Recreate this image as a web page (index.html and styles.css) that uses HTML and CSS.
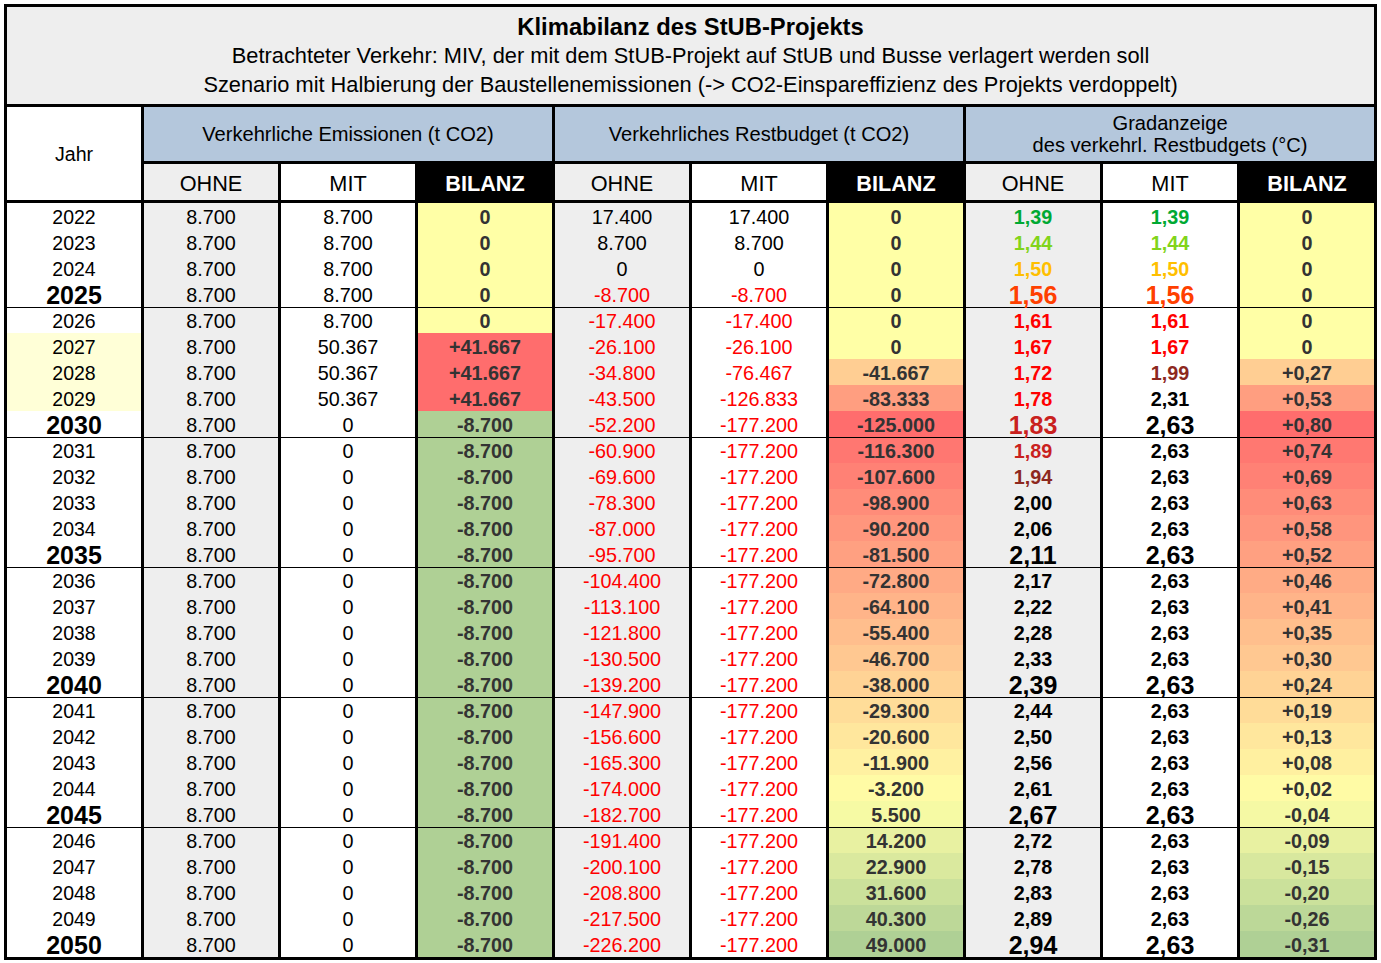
FILE: index.html
```html
<!DOCTYPE html>
<html lang="de">
<head>
<meta charset="utf-8">
<title>Klimabilanz des StUB-Projekts</title>
<link rel="stylesheet" href="styles.css">
</head>
<body>
<table class="sheet">
  <colgroup>
    <col><col><col><col><col><col><col><col><col><col>
  </colgroup>
  <thead>
    <tr class="r-title">
      <td colspan="10" class="title">
        <div class="title-main">Klimabilanz des StUB-Projekts</div>
        <div class="title-sub">Betrachteter Verkehr: MIV, der mit dem StUB-Projekt auf StUB und Busse verlagert werden soll</div>
        <div class="title-sub">Szenario mit Halbierung der Baustellenemissionen (-&gt; CO2-Einspareffizienz des Projekts verdoppelt)</div>
      </td>
    </tr>
    <tr class="r-group">
      <td rowspan="2" class="h-jahr">Jahr</td>
      <td colspan="3" class="h-group">Verkehrliche Emissionen (t CO2)</td>
      <td colspan="3" class="h-group">Verkehrliches Restbudget (t CO2)</td>
      <td colspan="3" class="h-group h-two">Gradanzeige<br>des verkehrl. Restbudgets (°C)</td>
    </tr>
    <tr class="r-sub">
      <td class="h-sub h-ohne">OHNE</td><td class="h-sub h-mit">MIT</td><td class="h-sub h-bil">BILANZ</td>
      <td class="h-sub h-ohne">OHNE</td><td class="h-sub h-mit">MIT</td><td class="h-sub h-bil">BILANZ</td>
      <td class="h-sub h-ohne">OHNE</td><td class="h-sub h-mit">MIT</td><td class="h-sub h-bil">BILANZ</td>
    </tr>
  </thead>
  <tbody>
    <tr><td class="yr">2022</td><td class="ohne">8.700</td><td class="mit">8.700</td><td class="bil b-yel">0</td><td class="ohne">17.400</td><td class="mit">17.400</td><td class="bil b-yel">0</td><td class="ohne grad g1">1,39</td><td class="mit grad g1">1,39</td><td class="bil b-yel">0</td></tr>
    <tr><td class="yr">2023</td><td class="ohne">8.700</td><td class="mit">8.700</td><td class="bil b-yel">0</td><td class="ohne">8.700</td><td class="mit">8.700</td><td class="bil b-yel">0</td><td class="ohne grad g2">1,44</td><td class="mit grad g2">1,44</td><td class="bil b-yel">0</td></tr>
    <tr><td class="yr">2024</td><td class="ohne">8.700</td><td class="mit">8.700</td><td class="bil b-yel">0</td><td class="ohne">0</td><td class="mit">0</td><td class="bil b-yel">0</td><td class="ohne grad g3">1,50</td><td class="mit grad g3">1,50</td><td class="bil b-yel">0</td></tr>
    <tr><td class="yr big">2025</td><td class="ohne">8.700</td><td class="mit">8.700</td><td class="bil b-yel">0</td><td class="ohne neg">-8.700</td><td class="mit neg">-8.700</td><td class="bil b-yel">0</td><td class="ohne grad g4 big">1,56</td><td class="mit grad g4 big">1,56</td><td class="bil b-yel">0</td></tr>

    <tr class="grp"><td class="yr">2026</td><td class="ohne">8.700</td><td class="mit">8.700</td><td class="bil b-yel">0</td><td class="ohne neg">-17.400</td><td class="mit neg">-17.400</td><td class="bil b-yel">0</td><td class="ohne grad g5">1,61</td><td class="mit grad g5">1,61</td><td class="bil b-yel">0</td></tr>
    <tr><td class="yr hl">2027</td><td class="ohne">8.700</td><td class="mit">50.367</td><td class="bil b-red">+41.667</td><td class="ohne neg">-26.100</td><td class="mit neg">-26.100</td><td class="bil b-yel">0</td><td class="ohne grad g5">1,67</td><td class="mit grad g5">1,67</td><td class="bil b-yel">0</td></tr>
    <tr><td class="yr hl">2028</td><td class="ohne">8.700</td><td class="mit">50.367</td><td class="bil b-red">+41.667</td><td class="ohne neg">-34.800</td><td class="mit neg">-76.467</td><td class="bil" style="background:rgb(255,206,147)">-41.667</td><td class="ohne grad g5">1,72</td><td class="mit grad g7">1,99</td><td class="bil" style="background:rgb(255,206,147)">+0,27</td></tr>
    <tr><td class="yr hl">2029</td><td class="ohne">8.700</td><td class="mit">50.367</td><td class="bil b-red">+41.667</td><td class="ohne neg">-43.500</td><td class="mit neg">-126.833</td><td class="bil" style="background:rgb(255,158,128)">-83.333</td><td class="ohne grad g5">1,78</td><td class="mit grad">2,31</td><td class="bil" style="background:rgb(255,158,128)">+0,53</td></tr>
    <tr><td class="yr big">2030</td><td class="ohne">8.700</td><td class="mit">0</td><td class="bil b-grn">-8.700</td><td class="ohne neg">-52.200</td><td class="mit neg">-177.200</td><td class="bil" style="background:rgb(255,109,109)">-125.000</td><td class="ohne grad g6 big">1,83</td><td class="mit grad big">2,63</td><td class="bil" style="background:rgb(255,109,109)">+0,80</td></tr>

    <tr class="grp"><td class="yr">2031</td><td class="ohne">8.700</td><td class="mit">0</td><td class="bil b-grn">-8.700</td><td class="ohne neg">-60.900</td><td class="mit neg">-177.200</td><td class="bil" style="background:rgb(255,119,113)">-116.300</td><td class="ohne grad g6">1,89</td><td class="mit grad">2,63</td><td class="bil" style="background:rgb(255,120,113)">+0,74</td></tr>
    <tr><td class="yr">2032</td><td class="ohne">8.700</td><td class="mit">0</td><td class="bil b-grn">-8.700</td><td class="ohne neg">-69.600</td><td class="mit neg">-177.200</td><td class="bil" style="background:rgb(255,129,117)">-107.600</td><td class="ohne grad g7">1,94</td><td class="mit grad">2,63</td><td class="bil" style="background:rgb(255,129,117)">+0,69</td></tr>
    <tr><td class="yr">2033</td><td class="ohne">8.700</td><td class="mit">0</td><td class="bil b-grn">-8.700</td><td class="ohne neg">-78.300</td><td class="mit neg">-177.200</td><td class="bil" style="background:rgb(255,140,121)">-98.900</td><td class="ohne grad">2,00</td><td class="mit grad">2,63</td><td class="bil" style="background:rgb(255,140,121)">+0,63</td></tr>
    <tr><td class="yr">2034</td><td class="ohne">8.700</td><td class="mit">0</td><td class="bil b-grn">-8.700</td><td class="ohne neg">-87.000</td><td class="mit neg">-177.200</td><td class="bil" style="background:rgb(255,150,125)">-90.200</td><td class="ohne grad">2,06</td><td class="mit grad">2,63</td><td class="bil" style="background:rgb(255,149,125)">+0,58</td></tr>
    <tr><td class="yr big">2035</td><td class="ohne">8.700</td><td class="mit">0</td><td class="bil b-grn">-8.700</td><td class="ohne neg">-95.700</td><td class="mit neg">-177.200</td><td class="bil" style="background:rgb(255,160,129)">-81.500</td><td class="ohne grad big">2,11</td><td class="mit grad big">2,63</td><td class="bil" style="background:rgb(255,160,129)">+0,52</td></tr>

    <tr class="grp"><td class="yr">2036</td><td class="ohne">8.700</td><td class="mit">0</td><td class="bil b-grn">-8.700</td><td class="ohne neg">-104.400</td><td class="mit neg">-177.200</td><td class="bil" style="background:rgb(255,170,133)">-72.800</td><td class="ohne grad">2,17</td><td class="mit grad">2,63</td><td class="bil" style="background:rgb(255,171,133)">+0,46</td></tr>
    <tr><td class="yr">2037</td><td class="ohne">8.700</td><td class="mit">0</td><td class="bil b-grn">-8.700</td><td class="ohne neg">-113.100</td><td class="mit neg">-177.200</td><td class="bil" style="background:rgb(255,180,137)">-64.100</td><td class="ohne grad">2,22</td><td class="mit grad">2,63</td><td class="bil" style="background:rgb(255,180,137)">+0,41</td></tr>
    <tr><td class="yr">2038</td><td class="ohne">8.700</td><td class="mit">0</td><td class="bil b-grn">-8.700</td><td class="ohne neg">-121.800</td><td class="mit neg">-177.200</td><td class="bil" style="background:rgb(255,190,141)">-55.400</td><td class="ohne grad">2,28</td><td class="mit grad">2,63</td><td class="bil" style="background:rgb(255,191,141)">+0,35</td></tr>
    <tr><td class="yr">2039</td><td class="ohne">8.700</td><td class="mit">0</td><td class="bil b-grn">-8.700</td><td class="ohne neg">-130.500</td><td class="mit neg">-177.200</td><td class="bil" style="background:rgb(255,200,145)">-46.700</td><td class="ohne grad">2,33</td><td class="mit grad">2,63</td><td class="bil" style="background:rgb(255,200,145)">+0,30</td></tr>
    <tr><td class="yr big">2040</td><td class="ohne">8.700</td><td class="mit">0</td><td class="bil b-grn">-8.700</td><td class="ohne neg">-139.200</td><td class="mit neg">-177.200</td><td class="bil" style="background:rgb(255,211,149)">-38.000</td><td class="ohne grad big">2,39</td><td class="mit grad big">2,63</td><td class="bil" style="background:rgb(255,211,149)">+0,24</td></tr>

    <tr class="grp"><td class="yr">2041</td><td class="ohne">8.700</td><td class="mit">0</td><td class="bil b-grn">-8.700</td><td class="ohne neg">-147.900</td><td class="mit neg">-177.200</td><td class="bil" style="background:rgb(255,221,153)">-29.300</td><td class="ohne grad">2,44</td><td class="mit grad">2,63</td><td class="bil" style="background:rgb(255,220,152)">+0,19</td></tr>
    <tr><td class="yr">2042</td><td class="ohne">8.700</td><td class="mit">0</td><td class="bil b-grn">-8.700</td><td class="ohne neg">-156.600</td><td class="mit neg">-177.200</td><td class="bil" style="background:rgb(255,231,157)">-20.600</td><td class="ohne grad">2,50</td><td class="mit grad">2,63</td><td class="bil" style="background:rgb(255,231,157)">+0,13</td></tr>
    <tr><td class="yr">2043</td><td class="ohne">8.700</td><td class="mit">0</td><td class="bil b-grn">-8.700</td><td class="ohne neg">-165.300</td><td class="mit neg">-177.200</td><td class="bil" style="background:rgb(255,241,161)">-11.900</td><td class="ohne grad">2,56</td><td class="mit grad">2,63</td><td class="bil" style="background:rgb(255,240,160)">+0,08</td></tr>
    <tr><td class="yr">2044</td><td class="ohne">8.700</td><td class="mit">0</td><td class="bil b-grn">-8.700</td><td class="ohne neg">-174.000</td><td class="mit neg">-177.200</td><td class="bil" style="background:rgb(255,251,165)">-3.200</td><td class="ohne grad">2,61</td><td class="mit grad">2,63</td><td class="bil" style="background:rgb(255,251,165)">+0,02</td></tr>
    <tr><td class="yr big">2045</td><td class="ohne">8.700</td><td class="mit">0</td><td class="bil b-grn">-8.700</td><td class="ohne neg">-182.700</td><td class="mit neg">-177.200</td><td class="bil" style="background:rgb(246,250,164)">5.500</td><td class="ohne grad big">2,67</td><td class="mit grad big">2,63</td><td class="bil" style="background:rgb(245,249,164)">-0,04</td></tr>

    <tr class="grp"><td class="yr">2046</td><td class="ohne">8.700</td><td class="mit">0</td><td class="bil b-grn">-8.700</td><td class="ohne neg">-191.400</td><td class="mit neg">-177.200</td><td class="bil" style="background:rgb(232,241,161)">14.200</td><td class="ohne grad">2,72</td><td class="mit grad">2,63</td><td class="bil" style="background:rgb(232,241,161)">-0,09</td></tr>
    <tr><td class="yr">2047</td><td class="ohne">8.700</td><td class="mit">0</td><td class="bil b-grn">-8.700</td><td class="ohne neg">-200.100</td><td class="mit neg">-177.200</td><td class="bil" style="background:rgb(218,233,158)">22.900</td><td class="ohne grad">2,78</td><td class="mit grad">2,63</td><td class="bil" style="background:rgb(216,232,158)">-0,15</td></tr>
    <tr><td class="yr">2048</td><td class="ohne">8.700</td><td class="mit">0</td><td class="bil b-grn">-8.700</td><td class="ohne neg">-208.800</td><td class="mit neg">-177.200</td><td class="bil" style="background:rgb(203,225,155)">31.600</td><td class="ohne grad">2,83</td><td class="mit grad">2,63</td><td class="bil" style="background:rgb(203,225,155)">-0,20</td></tr>
    <tr><td class="yr">2049</td><td class="ohne">8.700</td><td class="mit">0</td><td class="bil b-grn">-8.700</td><td class="ohne neg">-217.500</td><td class="mit neg">-177.200</td><td class="bil" style="background:rgb(189,216,152)">40.300</td><td class="ohne grad">2,89</td><td class="mit grad">2,63</td><td class="bil" style="background:rgb(188,216,152)">-0,26</td></tr>
    <tr><td class="yr big">2050</td><td class="ohne">8.700</td><td class="mit">0</td><td class="bil b-grn">-8.700</td><td class="ohne neg">-226.200</td><td class="mit neg">-177.200</td><td class="bil" style="background:rgb(175,208,149)">49.000</td><td class="ohne grad big">2,94</td><td class="mit grad big">2,63</td><td class="bil" style="background:rgb(175,208,149)">-0,31</td></tr>
  </tbody>
</table>
</body>
</html>
```

FILE: styles.css
```css
html, body {
  margin: 0;
  padding: 0;
  background: #ffffff;
}

body {
  font-family: "Liberation Sans", Arial, sans-serif;
  color: #000;
}

.sheet {
  margin: 4px 0 0 4px;
  width: 1373px;
  table-layout: fixed;
  border-collapse: separate;
  border-spacing: 3px 0;
  background: #000;
  border-top: 3px solid #000;
  border-bottom: 3px solid #000;
}

.sheet col {
  width: 134px;
}

.sheet td {
  padding: 0;
  text-align: center;
  white-space: nowrap;
}

/* Title block */
.r-title {
  height: 100px;
}

.title {
  background: #eeeeee;
  border-bottom: 3px solid #000;
  vertical-align: top;
  padding-top: 5px !important;
  line-height: 29px;
}

.title-main {
  font-weight: bold;
  font-size: 23.8px;
}

.title-sub {
  font-size: 21.8px;
}

/* Group header */
.r-group {
  height: 57px;
}

.h-jahr {
  background: #ffffff;
  border-bottom: 3px solid #000;
  font-size: 19.6px;
  vertical-align: middle;
  padding-top: 2px !important;
}

.h-group {
  background: #b4c7dc;
  border-bottom: 3px solid #000;
  font-size: 20.1px;
  vertical-align: middle;
}

.h-two {
  line-height: 22px;
}

/* Sub header */
.r-sub {
  height: 39px;
}

.h-sub {
  border-bottom: 3px solid #000;
  font-size: 21.7px;
  vertical-align: middle;
  line-height: 24px;
  padding-top: 3px !important;
}

.h-ohne {
  background: #eeeeee;
}

.h-mit {
  background: #ffffff;
}

.h-bil {
  background: #000;
  color: #fff;
  font-weight: bold;
}

/* Data rows */
.sheet tbody tr {
  height: 26px;
}

.sheet tbody td {
  vertical-align: bottom;
  font-size: 19.8px;
  line-height: 24px;
}

.sheet tbody tr.grp td {
  border-top: 1px solid #000;
}

.yr {
  background: #ffffff;
  font-size: 19.5px !important;
}

.yr.hl {
  background: #ffffd7;
}

.ohne {
  background: #eeeeee;
}

.mit {
  background: #ffffff;
}

.bil {
  font-weight: bold;
  color: #333333;
}

.b-yel {
  background: #ffffa6;
}

.b-red {
  background: #ff6d6d;
}

.b-grn {
  background: #afd095;
}

.neg {
  color: #ff0000;
}

.grad {
  font-weight: bold;
}

.sheet tbody td.big {
  font-weight: bold;
  font-size: 25px !important;
  line-height: 23px;
}

.g1 { color: #00a933; }
.g2 { color: #81d41a; }
.g3 { color: #ffbf00; }
.g4 { color: #ff4000; }
.g5 { color: #ff0000; }
.g6 { color: #c9211e; }
.g7 { color: #8d281e; }
```
